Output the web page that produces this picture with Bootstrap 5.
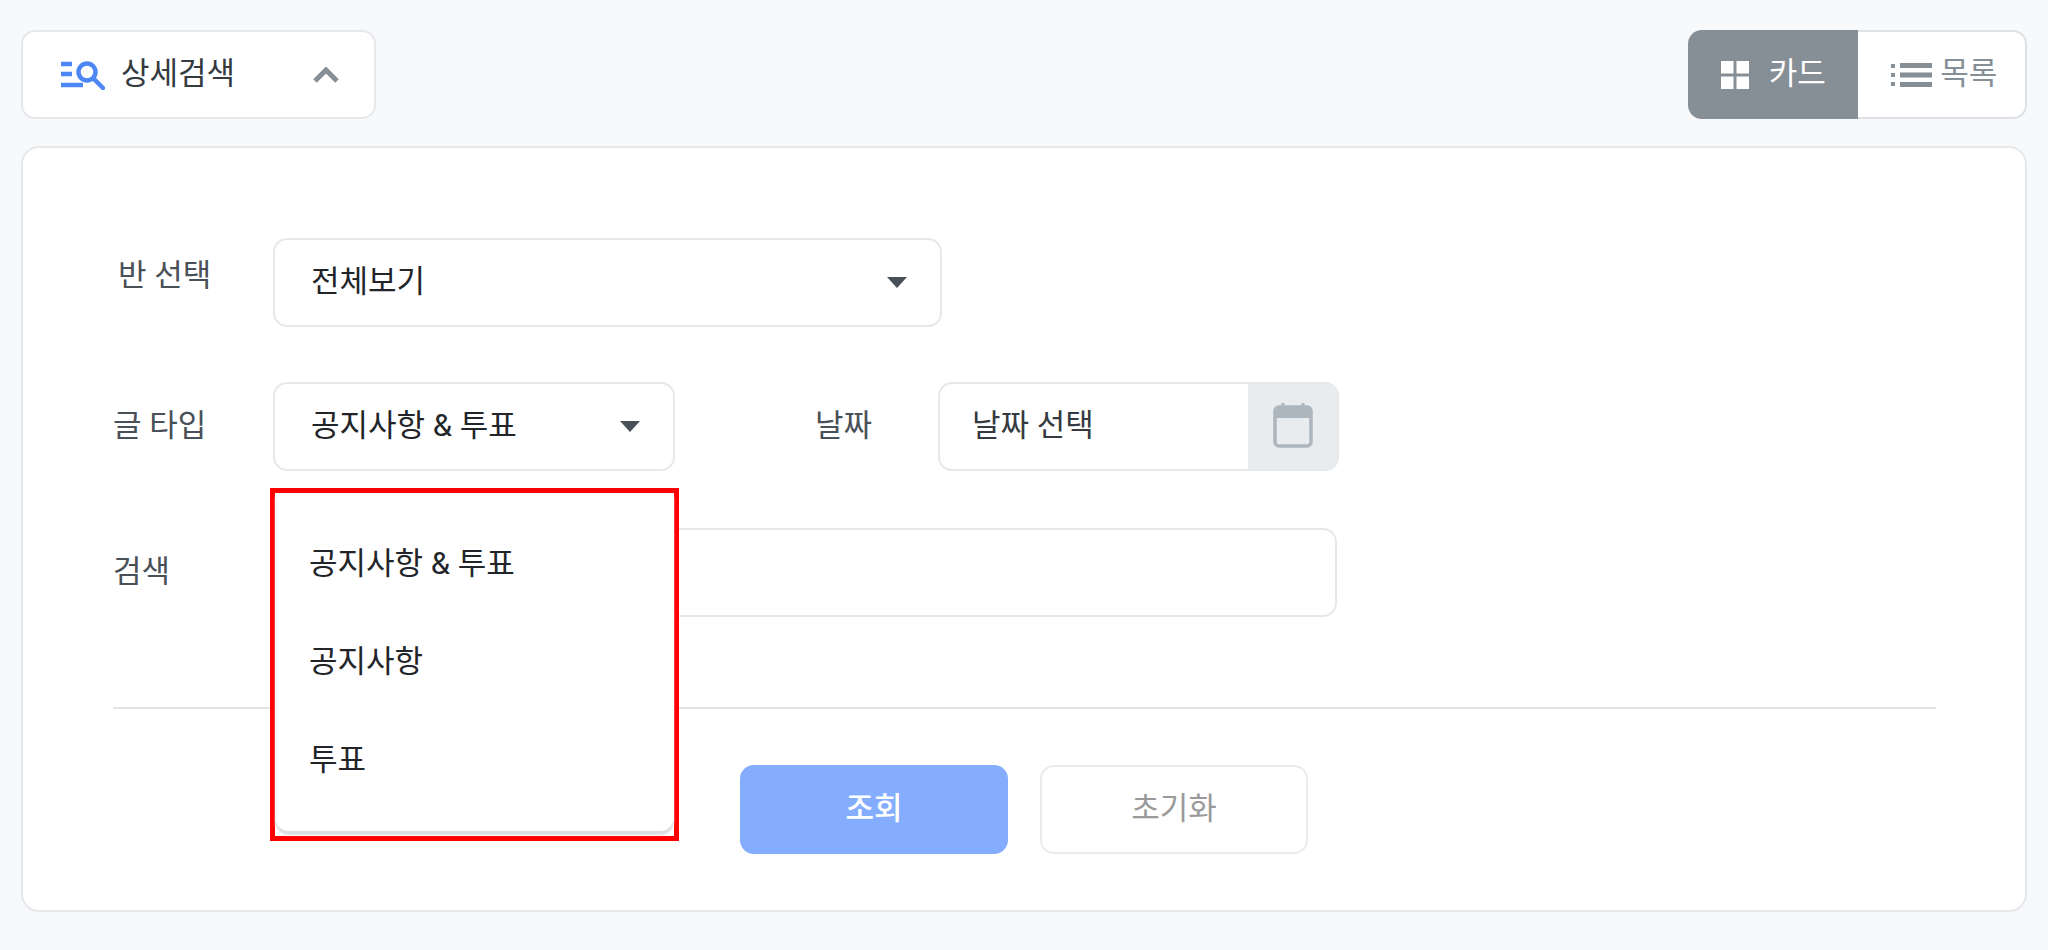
<!DOCTYPE html>
<html lang="ko">
<head>
    <meta charset="UTF-8">
    <meta name="viewport" content="width=device-width, initial-scale=1.0">
    <title>상세검색</title>
    <link rel="stylesheet" href="https://cdn.jsdelivr.net/npm/bootstrap@5.3.2/dist/css/bootstrap.min.css">
    <style>
        html, body {
            height: 100%;
        }
        body {
            background-color: #f8f9fb;
            color: #212529;
            font-family: "Roboto", "Noto Sans CJK KR", sans-serif;
            font-size: 31px;
            padding: 30px 21px 0 21px;
        }
        .top-bar {
            height: 89px;
            margin-bottom: 27px;
        }
        .search-toggle {
            width: 355px;
            height: 89px;
            padding: 0 34px 0 38px;
            background-color: #fff;
            border: 2px solid #e6e8eb;
            border-radius: 14px;
            font-size: 31px;
            color: #343a40;
        }
        .view-switch {
            width: 339px;
            height: 89px;
        }
        .view-switch .btn {
            font-size: 31px;
            height: 89px;
            padding: 0;
            border-radius: 14px;
        }
        .view-on {
            width: 170px;
            gap: 20px;
            background-color: #868e96;
            border: 0;
            color: #fff;
        }
        .view-switch .view-off {
            width: 169px;
            padding-left: 6px;
            background-color: #fff;
            border: 2px solid #dee2e6;
            border-left: 0;
            color: #868e96;
        }
        .search-box {
            height: 766px;
            background-color: #fff;
            border: 2px solid #e6e8eb;
            border-radius: 18px;
            padding: 90px 89px 0 90px;
        }
        .field-row {
            height: 89px;
            margin-bottom: 55px;
        }
        .field-row-tight {
            margin-bottom: 57px;
        }
        .field-label {
            width: 160px;
            font-size: 31px;
            color: #495057;
        }
        .label-first {
            padding-left: 5px;
            padding-bottom: 12px;
        }
        .select-box {
            height: 89px;
            padding: 0 33px 0 36px;
            background-color: #fff;
            border: 2px solid #e6e8eb;
            border-radius: 14px;
            font-size: 31px;
            color: #212529;
        }
        .select-wide {
            width: 669px;
        }
        .select-mid {
            width: 402px;
        }
        .date-label {
            width: 263px;
            padding-left: 140px;
            font-size: 31px;
            color: #495057;
        }
        .date-box {
            width: 401px;
            height: 89px;
            background-color: #fff;
            border: 2px solid #e6e8eb;
            border-radius: 14px;
            overflow: hidden;
        }
        .date-text {
            padding-left: 32px;
            color: #343a40;
        }
        .date-addon {
            width: 89px;
            padding-bottom: 3px;
            background-color: #e9ecef;
        }
        .text-box {
            width: 1064px;
            height: 89px;
            border: 2px solid #e6e8eb;
            border-radius: 14px;
        }
        .text-box:focus {
            box-shadow: none;
        }
        .red-frame {
            position: absolute;
            top: 106px;
            left: -3px;
            width: 409px;
            border: 5px solid #f00;
            padding-bottom: 5px;
            background-color: #fff;
            z-index: 10;
        }
        .red-frame .dropdown-menu {
            position: static;
            width: 100%;
            min-width: 0;
            margin: 0;
            padding: 22px 0 22px;
            border: 0;
            border-radius: 0 0 14px 14px;
            box-shadow: 0 4px 2px #dcdfe2;
        }
        .red-frame .dropdown-item {
            height: 98px;
            padding: 0 0 0 34px;
            display: flex;
            align-items: center;
            font-size: 31px;
            color: #212529;
        }
        .red-frame .dropdown-item:hover {
            background-color: #f8f9fa;
        }
        .rule-line {
            margin: 0;
            margin-top: 90px;
            border-color: #e2e4e7;
            opacity: 1;
            border-top-width: 2px;
        }
        .action-row {
            margin-top: 56px;
            padding-left: 627px;
            gap: 32px;
        }
        .action-row .btn {
            width: 268px;
            height: 89px;
            border-radius: 14px;
            font-size: 31px;
        }
        .btn-search {
            background-color: #85adff;
            border: 0;
            color: #fff;
            font-weight: 500;
        }
        .btn-reset {
            background-color: #fff;
            border: 2px solid #e9ecef;
            color: #9a9a9a;
        }
    </style>
</head>
<body>
    <main>
        <div class="top-bar d-flex justify-content-between">
            <button class="search-toggle btn d-flex align-items-center justify-content-between">
                <span class="d-flex align-items-center gap-3">
                    <svg width="44" height="30" viewBox="0 0 44 30" fill="none">
                        <g stroke="#4d86f5" stroke-width="4.5">
                            <path d="M0 4h11M0 14h11M0 25h22"/>
                            <circle cx="26" cy="12" r="8.5"/>
                            <path d="M32.5 18.5 42 28" stroke-linecap="round"/>
                        </g>
                    </svg>
                    <span>상세검색</span>
                </span>
                <svg width="28" height="18" viewBox="0 0 28 18" fill="none">
                    <path d="M3 15 14 4l11 11" stroke="#868e96" stroke-width="5"/>
                </svg>
            </button>
            <div class="view-switch btn-group">
                <button class="btn view-on d-flex align-items-center justify-content-center">
                    <svg width="28" height="28" viewBox="0 0 28 28" fill="#fff">
                        <rect x="0" y="0" width="12.5" height="12.5"/>
                        <rect x="15.5" y="0" width="12.5" height="12.5"/>
                        <rect x="0" y="15.5" width="12.5" height="12.5"/>
                        <rect x="15.5" y="15.5" width="12.5" height="12.5"/>
                    </svg>
                    <span>카드</span>
                </button>
                <button class="btn view-off d-flex align-items-center justify-content-center gap-2">
                    <svg width="41" height="24" viewBox="0 0 41 24" fill="#868e96">
                        <rect x="0" y="1" width="4" height="4"/>
                        <rect x="0" y="10" width="4" height="4"/>
                        <rect x="0" y="19" width="4" height="4"/>
                        <rect x="9" y="0" width="32" height="5"/>
                        <rect x="9" y="9.5" width="32" height="5"/>
                        <rect x="9" y="19" width="32" height="5"/>
                    </svg>
                    <span>목록</span>
                </button>
            </div>
        </div>

        <section class="search-box">
            <div class="field-row d-flex align-items-center">
                <div class="field-label label-first">반 선택</div>
                <button class="select-box select-wide btn d-flex align-items-center justify-content-between">
                    <span>전체보기</span>
                    <svg width="20" height="11" viewBox="0 0 20 11" fill="#495057"><path d="M0 0h20L10 11z"/></svg>
                </button>
            </div>

            <div class="field-row field-row-tight d-flex align-items-center">
                <div class="field-label">글 타입</div>
                <div class="dropdown">
                    <button class="select-box select-mid btn d-flex align-items-center justify-content-between">
                        <span>공지사항 &amp; 투표</span>
                        <svg width="20" height="11" viewBox="0 0 20 11" fill="#495057"><path d="M0 0h20L10 11z"/></svg>
                    </button>
                    <div class="red-frame">
                        <ul class="dropdown-menu show">
                            <li><a class="dropdown-item" href="#">공지사항 &amp; 투표</a></li>
                            <li><a class="dropdown-item" href="#">공지사항</a></li>
                            <li><a class="dropdown-item" href="#">투표</a></li>
                        </ul>
                    </div>
                </div>
                <div class="date-label">날짜</div>
                <div class="date-box d-flex">
                    <div class="date-text flex-grow-1 d-flex align-items-center">날짜 선택</div>
                    <div class="date-addon d-flex align-items-center justify-content-center">
                        <svg width="40" height="46" viewBox="0 0 40 46" fill="none">
                            <path d="M10 1v8M30 1v8" stroke="#adb5bd" stroke-width="3"/>
                            <rect x="2" y="5" width="36" height="39" rx="4" stroke="#adb5bd" stroke-width="3.5"/>
                            <path d="M2 9a4 4 0 0 1 4-4h28a4 4 0 0 1 4 4v7H2z" fill="#adb5bd"/>
                        </svg>
                    </div>
                </div>
            </div>

            <div class="field-row d-flex align-items-center">
                <div class="field-label">검색</div>
                <input class="text-box form-control" type="text">
            </div>

            <hr class="rule-line">

            <div class="action-row d-flex">
                <button class="btn btn-search">조회</button>
                <button class="btn btn-reset">초기화</button>
            </div>
        </section>
    </main>
    <script src="https://cdn.jsdelivr.net/npm/bootstrap@5.3.2/dist/js/bootstrap.bundle.min.js"></script>
</body>
</html>
